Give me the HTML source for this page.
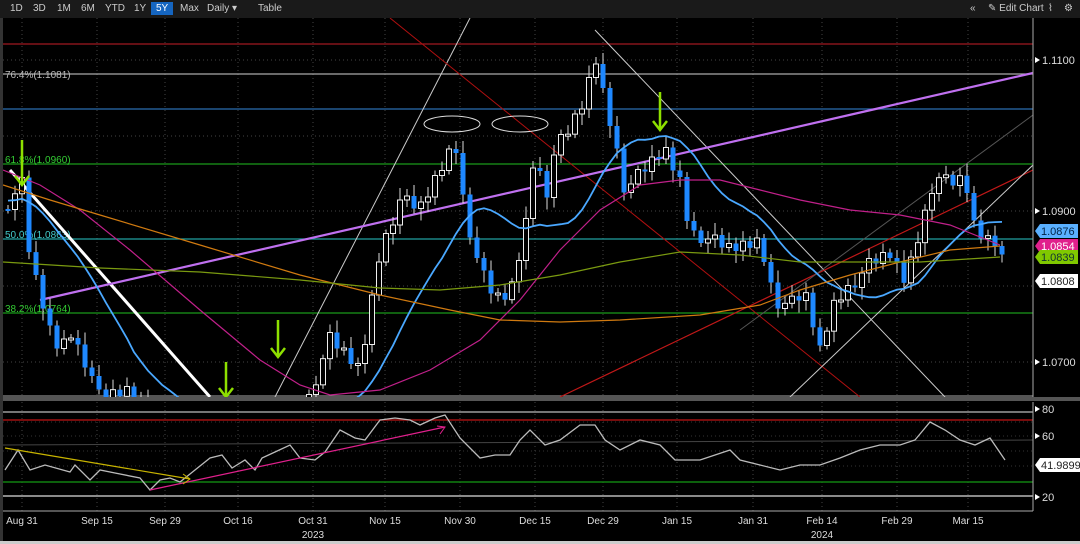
<!DOCTYPE html>
<html><head><meta charset="utf-8"><style>
body{margin:0;background:#000;width:1080px;height:544px;overflow:hidden;font-family:"Liberation Sans",sans-serif}
#tb{position:absolute;left:0;top:0;width:1080px;height:18px;background:#1a1a1a}
#tb span{position:absolute;top:3px;font-size:10px;color:#ccc}
svg{position:absolute;left:0;top:0}
</style></head><body>
<svg id="s" width="1080" height="544" font-family="Liberation Sans, sans-serif"></svg>
<div id="tb">
<span style="left:10px">1D</span><span style="left:33px">3D</span><span style="left:57px">1M</span><span style="left:81px">6M</span><span style="left:105px">YTD</span><span style="left:134px">1Y</span>
<span style="left:151px;top:2px;background:#1565c0;color:#fff;padding:1px 5px">5Y</span>
<span style="left:180px">Max</span><span style="left:207px">Daily ▾</span><span style="left:258px">Table</span>
<span style="left:970px">«</span><span style="left:988px">✎ Edit Chart</span><span style="left:1048px">⌇</span><span style="left:1064px">⚙</span>
</div>
<script>
const s=document.getElementById('s');let h='';
const L=(x1,y1,x2,y2,c,w,d)=>h+=`<line x1="${x1}" y1="${y1}" x2="${x2}" y2="${y2}" stroke="${c}" stroke-width="${w||1}" ${d?'stroke-dasharray="'+d+'"':''}/>`;
const T=(x,y,t,c,sz,a)=>h+=`<text x="${x}" y="${y}" fill="${c}" font-size="${sz||10}" ${a?'text-anchor="'+a+'"':''}>${t}</text>`;
const PL=(pts,c,w)=>h+=`<polyline points="${pts.map(p=>p.join(',')).join(' ')}" fill="none" stroke="${c}" stroke-width="${w}"/>`;
h+='<defs><clipPath id="c"><rect x="3" y="18" width="1030" height="380"/></clipPath><clipPath id="c2"><rect x="3" y="402" width="1030" height="110"/></clipPath></defs>';
const vx=[22,97,165,238,313,385,460,535,603,677,753,822,897,968];
vx.forEach(x=>{L(x,18,x,397,'#444',1,'1 3');L(x,402,x,511,'#444',1,'1 3');});
[60,136,211,286,362].forEach(y=>L(3,y,1033,y,'#444',1,'1 3'));
[422,436,451,466,482].forEach(y=>L(3,y,1033,y,'#333',1,'1 3'));
L(3,44,1033,44,'#a01820',1.3);L(3,74,1033,74,'#aaa',1.3);L(3,109,1033,109,'#2a6cb0',1.3);
L(3,164,1033,164,'#1a9a1a',1.3);L(3,239,1033,239,'#20a0a0',1.3);L(3,313,1033,313,'#1a9a1a',1.3);L(3,396,1033,396,'#888',1.3);
T(5,78,'76.4%(1.1081)','#bbb');T(5,163,'61.8%(1.0960)','#3c3');T(5,238,'50.0%(1.0863)','#4cc');T(5,312,'38.2%(1.0764)','#3c3');
h+='<g clip-path="url(#c)">';
L(275,397,470,18,'#ccc',1);L(595,30,945,397,'#ccc',1);L(390,18,860,397,'#b01010',1);L(560,397,1033,170,'#c01818',1.2);
L(790,397,1033,165,'#ccc',1);L(740,330,1033,115,'#555',1);L(10,170,210,397,'#fff',3);L(40,300,1033,73,'#c070f0',2.2);
h+='<ellipse cx="452" cy="124" rx="28" ry="8" fill="none" stroke="#ddd"/><ellipse cx="520" cy="124" rx="28" ry="8" fill="none" stroke="#ddd"/>';
const P=[[0,210],[10,200],[22,185],[30,260],[40,295],[50,330],[60,350],[70,330],[90,370],[100,400],[130,390],[160,430],[250,450],[300,420],[330,340],[360,370],[380,250],[400,200],[420,210],[440,170],[455,140],[465,210],[480,270],[495,300],[510,295],[525,230],[535,145],[545,200],[555,150],[570,130],[585,100],[595,55],[605,100],[615,140],[625,190],[640,175],[655,160],[665,150],[680,180],[690,230],[710,240],[730,250],[760,240],[775,300],[790,305],[805,295],[820,350],[835,300],[850,285],[870,265],[890,255],[905,280],[920,230],[935,175],[950,185],[965,180],[975,230],[990,240],[1000,240],[1005,280]];
const f=x=>{for(let i=1;i<P.length;i++)if(x<=P[i][0]){const a=P[i-1],b=P[i];return a[1]+(b[1]-a[1])*(x-a[0])/(b[0]-a[0]);}return 280;};
let xs=[],cs=[];for(let x=8;x<=1005;x+=7){xs.push(x);cs.push(f(x)+((x*37)%11-5)*1.5);}
let prev=f(1);
xs.forEach((x,i)=>{const c=cs[i],o=prev;const hi=Math.min(o,c)-4-(i*13%9),lo=Math.max(o,c)+4+(i*7%9);
L(x,hi,x,lo,'#ddd',1);const t=Math.min(o,c),hh=Math.max(2,Math.abs(o-c));
if(c<o)h+=`<rect x="${x-2.5}" y="${t}" width="5" height="${hh}" fill="#000" stroke="#eee" stroke-width="1"/>`;else h+=`<rect x="${x-2.5}" y="${t}" width="5" height="${hh}" fill="#1e88ff"/>`;prev=c;});
const ma=(n,pre,col,w)=>{const a=Array(n).fill(pre).concat(cs);let pts=[];xs.forEach((x,i)=>{let sm=0;for(let k=0;k<n;k++)sm+=a[i+n-k];pts.push([x,(sm/n).toFixed(1)]);});PL(pts,col,w);};
ma(16,200,'#4aa8ff',1.8);
PL([[3,170],[40,185],[80,210],[130,250],[200,310],[260,360],[300,385],[330,395],[380,390],[430,370],[480,340],[520,300],[560,250],[600,210],[640,185],[680,180],[720,180],[760,190],[800,200],[850,210],[900,215],[950,225],[1000,245]],'#c0208a',1.2);
PL([[3,185],[50,200],[100,215],[200,245],[300,275],[380,295],[450,310],[500,320],[560,322],[620,320],[700,315],[760,305],[800,290],[850,275],[900,262],[950,250],[1000,246]],'#d07a10',1.2);
PL([[3,262],[100,268],[200,272],[300,280],[380,288],[440,290],[500,285],[560,275],[620,262],[680,252],[740,255],[800,262],[860,262],[920,262],[1000,257]],'#7a9a10',1.2);
[[22,140,185],[278,320,357],[226,362,397],[660,92,130]].forEach(a=>{L(a[0],a[1],a[0],a[2],'#8ee000',2.5);h+=`<polyline points="${a[0]-7},${a[2]-9} ${a[0]},${a[2]} ${a[0]+7},${a[2]-9}" fill="none" stroke="#8ee000" stroke-width="2.5"/>`;});
h+='</g>';
L(1033,18,1033,398,'#aaa',1);
[[60,'1.1100'],[211,'1.0900'],[362,'1.0700']].forEach(a=>{h+=`<polygon points="1035,${a[0]-3} 1040,${a[0]} 1035,${a[0]+3}" fill="#fff"/>`;T(1042,a[0]+4,a[1],'#ddd',11);});
[[231,'1.0876','#5ab0ff','#024'],[246,'1.0854','#e0208c','#fff'],[257,'1.0839','#80c800','#133'],[281,'1.0808','#fff','#222']].forEach(a=>{h+=`<polygon points="1035,${a[0]} 1040,${a[0]-7} 1078,${a[0]-7} 1078,${a[0]+7} 1040,${a[0]+7}" fill="${a[2]}"/>`;T(1041,a[0]+4,a[1],a[3],11);});
h+='<rect x="0" y="397" width="1080" height="4" fill="#555"/>';
L(3,412,1033,412,'#bbb',1.2);L(3,420,1033,420,'#a01010',1.5);L(3,482,1033,482,'#108010',1.5);L(3,496,1033,496,'#ddd',1.2);L(3,511,1033,511,'#aaa',1);
L(3,445,1033,440,'#444',1);L(1033,402,1033,511,'#aaa',1);
[[409,'80'],[436,'60'],[497,'20']].forEach(a=>{h+=`<polygon points="1035,${a[0]-3} 1040,${a[0]} 1035,${a[0]+3}" fill="#fff"/>`;T(1042,a[0]+4,a[1],'#ddd',11);});
h+='<polygon points="1035,465 1040,458 1080,458 1080,472 1040,472" fill="#fff"/>';T(1041,469,'41.9899','#222',11);
const R=[[5,470],[18,450],[30,470],[45,465],[70,472],[75,465],[90,480],[100,470],[115,473],[140,478],[150,490],[160,480],[170,478],[180,482],[195,470],[210,458],[222,455],[232,468],[245,460],[255,470],[262,458],[275,452],[290,445],[300,458],[315,460],[325,452],[340,430],[355,438],[365,440],[380,420],[395,418],[410,420],[420,425],[435,418],[445,415],[460,438],[480,458],[495,455],[510,455],[520,440],[530,430],[545,445],[560,440],[580,425],[595,425],[605,440],[620,450],[640,440],[660,445],[675,460],[700,460],[715,455],[730,450],[740,460],[760,465],[780,470],[800,465],[820,465],[840,458],[860,450],[880,445],[900,445],[915,440],[930,422],[945,430],[960,440],[975,445],[990,438],[1005,460]];
h+=`<polyline clip-path="url(#c2)" points="${R.map(p=>p.join(',')).join(' ')}" fill="none" stroke="#bbb" stroke-width="1.3"/>`;
L(5,448,190,479,'#c8b400',1.2);L(150,490,445,427,'#e0208c',1.2);
h+='<polyline points="437,426 445,427 440,434" fill="none" stroke="#e0208c"/><polyline points="183,474 190,479 183,484" fill="none" stroke="#c8b400"/>';
const dl=['Aug 31','Sep 15','Sep 29','Oct 16','Oct 31','Nov 15','Nov 30','Dec 15','Dec 29','Jan 15','Jan 31','Feb 14','Feb 29','Mar 15'];
vx.forEach((x,i)=>{T(x,524,dl[i],'#ddd',10,'middle');});
T(313,538,'2023','#ddd',10,'middle');T(822,538,'2024','#ddd',10,'middle');
h+='<rect x="0" y="541" width="1080" height="3" fill="#ccc"/><rect x="0" y="18" width="3" height="523" fill="#333"/>';
s.innerHTML=h;
</script>
</body></html>
